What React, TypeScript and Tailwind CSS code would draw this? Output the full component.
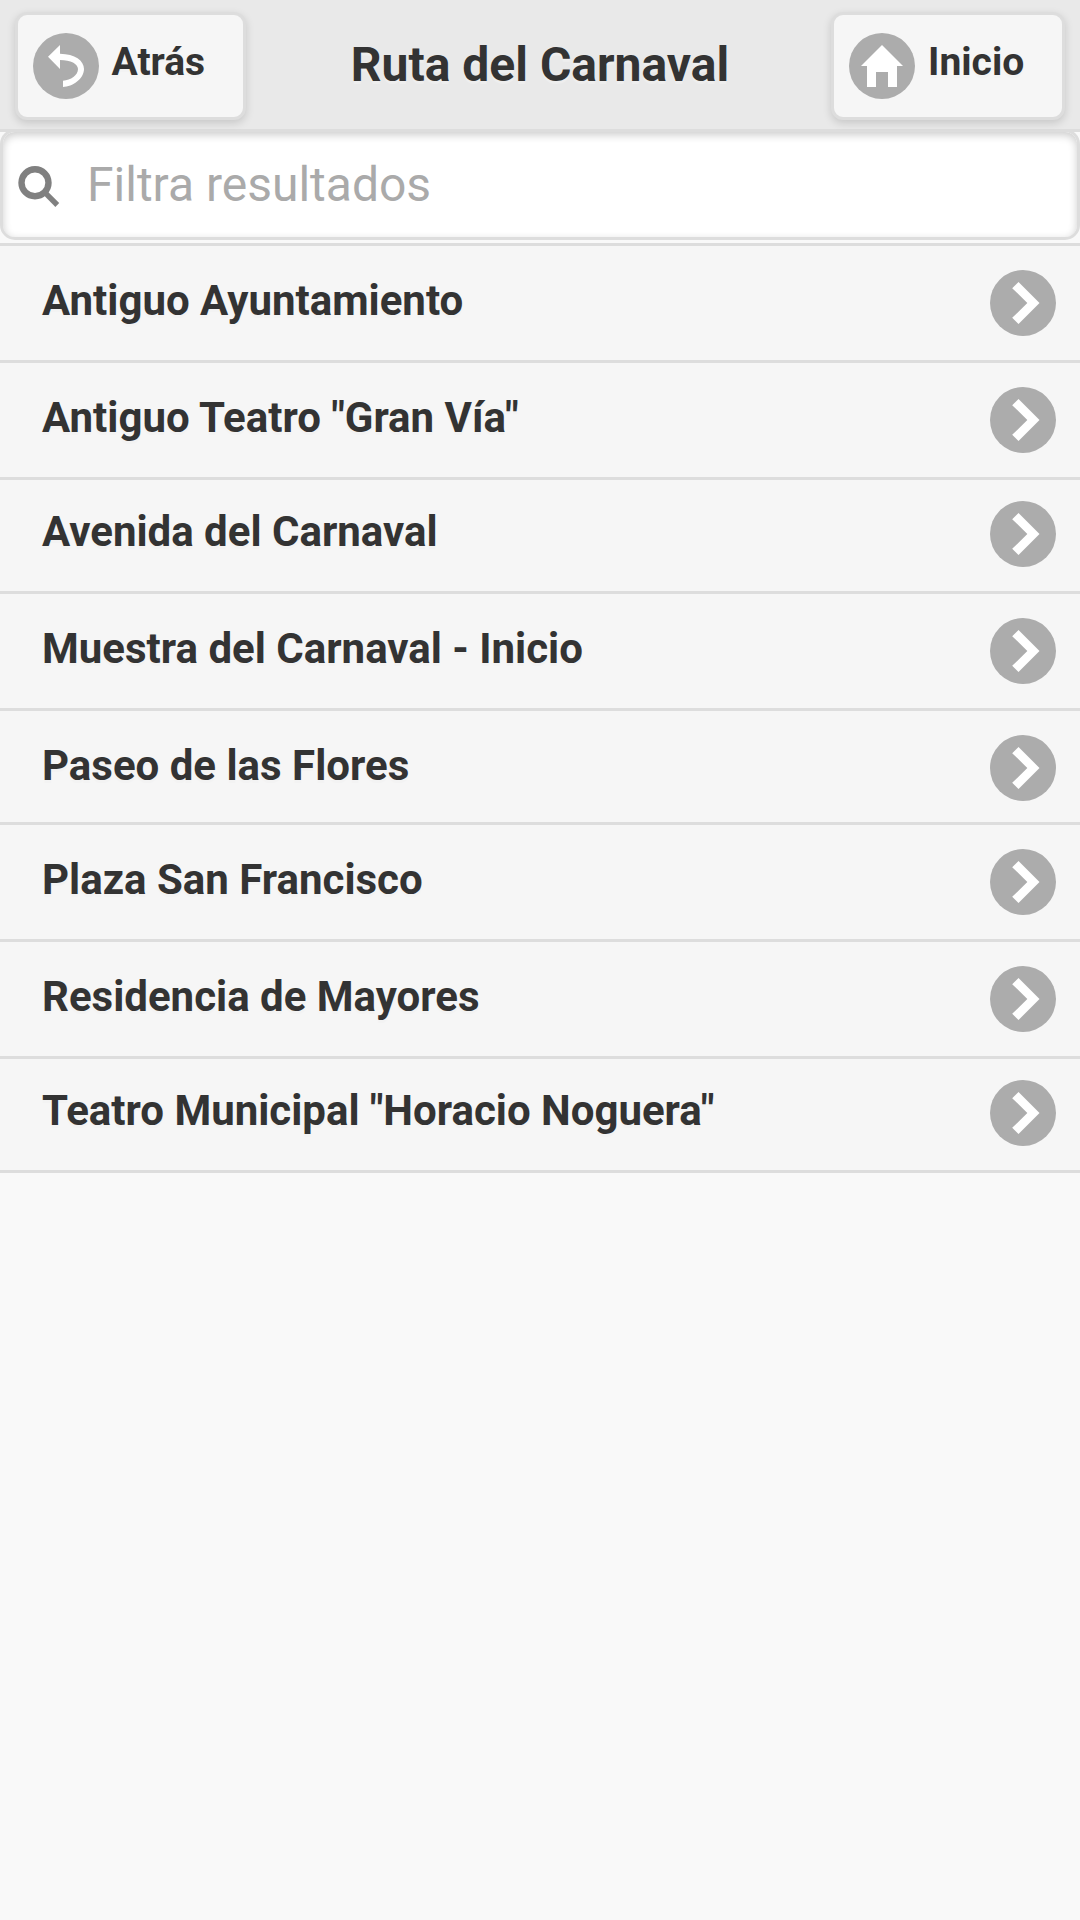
import React from "react";

const places = [
  { name: "Antiguo Ayuntamiento", row: "h-[117px] pt-6" },
  { name: 'Antiguo Teatro "Gran Vía"', row: "h-[117px] pt-6" },
  { name: "Avenida del Carnaval", row: "h-[114px] pt-[21px]" },
  { name: "Muestra del Carnaval - Inicio", row: "h-[117px] pt-6" },
  { name: "Paseo de las Flores", row: "h-[114px] pt-6" },
  { name: "Plaza San Francisco", row: "h-[117px] pt-6" },
  { name: "Residencia de Mayores", row: "h-[117px] pt-6" },
  { name: 'Teatro Municipal "Horacio Noguera"', row: "h-[114px] pt-[21px]" },
];

function Disc({ children }: { children: React.ReactNode }) {
  return (
    <span className="flex size-[66px] shrink-0 items-center justify-center rounded-full bg-[#acacac]">
      <svg viewBox="0 0 14 14" className="size-[42px] fill-white">
        {children}
      </svg>
    </span>
  );
}

const buttonClass =
  "flex h-[108px] items-start rounded-xl border-3 border-[#ddd] bg-[#f6f6f6] pt-[18px] pl-[15px] text-[39px] leading-[48px] font-bold shadow-[0_3px_9px_rgba(0,0,0,0.15)]";

export default function App() {
  return (
    <div className="min-h-[1920px] w-[1080px] bg-[#f9f9f9] font-[Roboto,sans-serif] text-[#333] [text-shadow:0_3px_0_#f3f3f3]">
      <header className="relative z-10 flex h-[132px] items-start justify-between border-b-3 border-[#ddd] bg-[#e9e9e9] px-[15px] pt-3 [text-shadow:0_3px_0_#eee]">
        <button className={`${buttonClass} w-[231px] gap-[12.5px]`}>
          <Disc>
            <path d="M5 0V2.900C10 3 13 5.200 13 8c0 3.300-3.800 5.900-7 6v-2.100c2.600-.2 5-1.800 5-3.900C11 6.300 8.600 5 5 5v3L1 3.900z" />
          </Disc>
          <span className="mt-[5px] [text-shadow:0_3px_0_#f3f3f3]">Atrás</span>
        </button>
        <h1 className="pt-[23px] pl-[3px] text-[48px] leading-[60px] font-bold">Ruta del Carnaval</h1>
        <button className={`${buttonClass} w-[234px] gap-[13px]`}>
          <Disc>
            <path d="M7 0 0 7h2v7h3V9h4v5h3V7h2z" />
          </Disc>
          <span className="mt-[5px] [text-shadow:0_3px_0_#f3f3f3]">Inicio</span>
        </button>
      </header>

      <label className="-mt-[3px] mb-[3px] flex h-[111px] items-center rounded-[15px] border-3 border-[#ddd] bg-white pl-[15px] shadow-[inset_0_3px_9px_rgba(0,0,0,0.2)]">
        <svg viewBox="0 0 42 42" className="mt-1 size-[42px] fill-none stroke-[#808080]">
          <circle cx="17" cy="16.700" r="13.500" strokeWidth="6.400" />
          <path d="M26 25.700 39.300 39" strokeWidth="5.400" />
        </svg>
        <input
          type="search"
          placeholder="Filtra resultados"
          className="ml-[27px] h-[60px] flex-1 bg-transparent text-[48px] leading-[60px] outline-none placeholder:text-[#aaa]"
        />
      </label>

      <ul className="border-t-3 border-[#ddd]">
        {places.map(({ name, row }) => (
          <li
            key={name}
            className={`${row} flex items-start justify-between border-b-3 border-[#ddd] bg-[#f6f6f6] pr-6 pl-[42px]`}
          >
            <span className="mt-1 text-[42px] leading-[54px] font-bold">{name}</span>
            <Disc>
              <path d="M5.500 0 3.400 2.050 8.450 7l-5.050 4.950L5.500 14l7-7z" />
            </Disc>
          </li>
        ))}
      </ul>
    </div>
  );
}
